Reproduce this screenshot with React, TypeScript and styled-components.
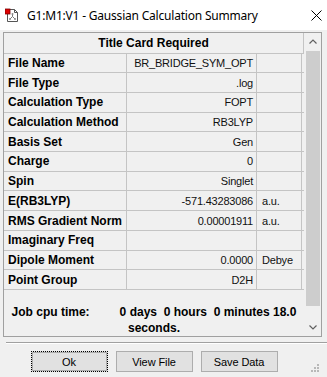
import React from "react";
import styled, { createGlobalStyle } from "styled-components";

const GlobalStyle = createGlobalStyle`
  html, body {
    margin: 0;
    padding: 0;
    background: #f0f0f0;
  }
  body {
    font-family: "Liberation Sans", Arial, sans-serif;
    color: #000;
  }
`;

const Window = styled.div`
  position: relative;
  width: 327px;
  height: 377px;
  background: #f0f0f0;
  overflow: hidden;
`;

const TitleBar = styled.div`
  height: 30px;
  background: #fff;
  display: flex;
  align-items: center;
  padding-left: 5px;
  box-sizing: border-box;
`;

const TitleText = styled.div`
  margin-left: 8px;
  flex: 1;
  font-family: "Noto Sans", "Open Sans", sans-serif;
  font-size: 12px;
  color: #000;
  letter-spacing: -0.2px;
`;

const CloseButton = styled.div`
  width: 46px;
  height: 30px;
  display: flex;
  align-items: center;
  justify-content: center;
  margin-right: -12px;
`;

const Body = styled.div`
  padding: 2px 0 0 3px;
`;

const Panel = styled.div`
  width: 319px;
  height: 305px;
  box-sizing: border-box;
  border: 1px solid #a0a0a0;
  display: flex;
  overflow: hidden;
`;

const TableArea = styled.div`
  width: 300px;
  display: flex;
  flex-direction: column;
`;

const HeaderRow = styled.div`
  height: 20px;
  border-bottom: 1px solid #c4c4c4;
  border-right: 1px solid #c4c4c4;
  display: flex;
  align-items: center;
  justify-content: center;
  font-weight: bold;
  font-size: 12px;
`;

const Row = styled.div`
  display: grid;
  grid-template-columns: 123px 130px 45px;
  height: 19px;
  border-bottom: 1px solid #c4c4c4;
`;

const Cell = styled.div<{ $kind: "label" | "value" | "unit" }>`
  display: flex;
  align-items: center;
  border-right: 1px solid #c4c4c4;
  white-space: nowrap;
  overflow: hidden;
  justify-content: ${({ $kind }) => ($kind === "value" ? "flex-end" : "flex-start")};
  padding: ${({ $kind }) =>
    $kind === "label" ? "0 0 0 4px" : $kind === "value" ? "0 3px 0 0" : "0 0 0 5px"};
  font-size: ${({ $kind }) => ($kind === "label" ? "12px" : "11px")};
  font-weight: ${({ $kind }) => ($kind === "label" ? "bold" : "normal")};
  letter-spacing: ${({ $kind }) => ($kind === "label" ? "0" : "-0.2px")};
  color: ${({ $kind }) => ($kind === "label" ? "#000" : "#111")};
`;

const JobTime = styled.div`
  margin-top: 14px;
  padding: 0 4px;
  text-align: center;
  font-weight: bold;
  font-size: 12px;
  line-height: 16px;
`;

const ScrollBar = styled.div`
  width: 17px;
  display: flex;
  flex-direction: column;
  background: #f0f0f0;
`;

const ScrollArrow = styled.div`
  height: 17px;
  display: flex;
  align-items: center;
  justify-content: center;
`;

const ScrollThumb = styled.div`
  height: 255px;
  margin: 1px 1px 0 2px;
  background: #cdcdcd;
`;

const ScrollTrack = styled.div`
  flex: 1;
`;

const Separator = styled.div`
  margin: 5px 0 0 3px;
  border-top: 1px solid #a0a0a0;
  border-bottom: 1px solid #fff;
  height: 0;
`;

const ButtonRow = styled.div`
  display: flex;
  justify-content: center;
  gap: 8px;
  margin-top: 7px;
  padding-right: 22px;
`;

const Button = styled.button<{ $focused?: boolean }>`
  width: 77px;
  height: 21px;
  padding: 0;
  box-sizing: border-box;
  background: #e1e1e1;
  border: 1px ${({ $focused }) => ($focused ? "dotted #000" : "solid #adadad")};
  outline: ${({ $focused }) => ($focused ? "1px solid #adadad" : "none")};
  outline-offset: -2px;
  font-family: "Liberation Sans", Arial, sans-serif;
  font-size: 11px;
  letter-spacing: -0.1px;
  color: #000;
`;

const Grip = styled.svg`
  position: absolute;
  right: 8px;
  bottom: 5px;
`;

const rows: [string, string, string][] = [
  ["File Name", "BR_BRIDGE_SYM_OPT", ""],
  ["File Type", ".log", ""],
  ["Calculation Type", "FOPT", ""],
  ["Calculation Method", "RB3LYP", ""],
  ["Basis Set", "Gen", ""],
  ["Charge", "0", ""],
  ["Spin", "Singlet", ""],
  ["E(RB3LYP)", "-571.43283086", "a.u."],
  ["RMS Gradient Norm", "0.00001911", "a.u."],
  ["Imaginary Freq", "", ""],
  ["Dipole Moment", "0.0000", "Debye"],
  ["Point Group", "D2H", ""],
];

const AppIconSvg = () => (
  <svg width="14" height="14" viewBox="0 0 14 14">
    <path d="M2.5 1.5 H9.5 L12.5 4.5 V13.5 H2.5 Z" fill="#fff" stroke="#555" />
    <path d="M9.5 1.5 V4.5 H12.5" fill="none" stroke="#555" />
    <rect x="0" y="1" width="5" height="5" fill="#e00000" stroke="#7a0000" strokeWidth="0.8" />
    <path d="M7.5 6 V8.5 M7.5 8.5 L5 11 M7.5 8.5 L10 11" stroke="#777" strokeWidth="1" fill="none" />
    <circle cx="7.5" cy="6" r="1" fill="#888" />
    <circle cx="5" cy="11" r="1" fill="#888" />
    <circle cx="10" cy="11" r="1" fill="#888" />
  </svg>
);

const Chevron = ({ up }: { up?: boolean }) => (
  <svg width="8" height="5" viewBox="0 0 8 5">
    <path d={up ? "M0.5 4.5 L4 1 L7.5 4.5" : "M0.5 0.5 L4 4 L7.5 0.5"} fill="none" stroke="#606060" strokeWidth="1.2" />
  </svg>
);

const App: React.FC = () => {
  const sp = (n: number) => "\u00a0".repeat(n);
  return (
    <Window>
      <GlobalStyle />
      <TitleBar>
        <AppIconSvg />
        <TitleText>G1:M1:V1 - Gaussian Calculation Summary</TitleText>
        <CloseButton>
          <svg width="11" height="11" viewBox="0 0 11 11">
            <path d="M0.5 0.5 L10.5 10.5 M10.5 0.5 L0.5 10.5" stroke="#000" strokeWidth="1" />
          </svg>
        </CloseButton>
      </TitleBar>
      <Body>
        <Panel>
          <TableArea>
            <HeaderRow>Title Card Required</HeaderRow>
            {rows.map(([label, value, unit]) => (
              <Row key={label}>
                <Cell $kind="label">{label}</Cell>
                <Cell $kind="value">{value}</Cell>
                <Cell $kind="unit">{unit}</Cell>
              </Row>
            ))}
            <JobTime>
              {`Job cpu time:${sp(9)}0 days${sp(2)}0 hours${sp(2)}0 minutes 18.0 seconds.`}
            </JobTime>
          </TableArea>
          <ScrollBar>
            <ScrollArrow>
              <Chevron up />
            </ScrollArrow>
            <ScrollThumb />
            <ScrollTrack />
            <ScrollArrow>
              <Chevron />
            </ScrollArrow>
          </ScrollBar>
        </Panel>
        <Separator />
        <ButtonRow>
          <Button $focused>Ok</Button>
          <Button>View File</Button>
          <Button>Save Data</Button>
        </ButtonRow>
      </Body>
      <Grip width="8" height="8" viewBox="0 0 8 8">
        {[
          [6, 0],
          [3, 3],
          [6, 3],
          [0, 6],
          [3, 6],
          [6, 6],
        ].map(([x, y]) => (
          <rect key={`${x}-${y}`} x={x} y={y} width="2" height="2" fill="#b8b8b8" />
        ))}
      </Grip>
    </Window>
  );
};

export default App;
